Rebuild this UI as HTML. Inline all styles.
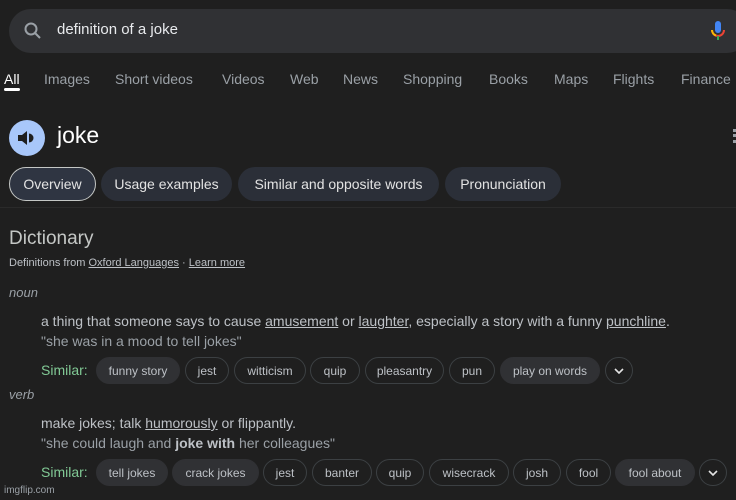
<!DOCTYPE html>
<html><head><meta charset="utf-8"><style>
*{margin:0;padding:0;box-sizing:border-box}
body{width:736px;height:500px;background:#1f1f1f;font-family:"Liberation Sans",Arial,sans-serif;position:relative;overflow:hidden;color:#bdc1c6}
.a{position:absolute;white-space:nowrap}
.tab{position:absolute;top:71px;font-size:14px;color:#9aa0a6}
.chip{position:absolute;top:167px;height:34px;border-radius:17px;background:#2b2f38;color:#e3e3e3;font-size:14px;line-height:34px;text-align:center}
.s{position:absolute;height:27px;border-radius:14px;border:1px solid #3c4043;color:#bdc1c6;font-size:12px;display:flex;align-items:center;justify-content:center;white-space:nowrap}
.f{background:#303134;border-color:#303134}
u{text-decoration:underline}
</style></head><body>
<div class="a" style="left:9px;top:9px;width:740px;height:44px;border-radius:22px;background:#303134"></div>
<svg class="a" style="left:23px;top:21px" width="20" height="20" viewBox="0 0 20 20"><circle cx="8" cy="8" r="5.5" stroke="#9aa0a6" stroke-width="2" fill="none"/><path d="M12 12l5 5" stroke="#9aa0a6" stroke-width="2"/></svg>
<div class="a" style="left:57px;top:21px;font-size:15px;color:#e8eaed">definition of a joke</div>
<svg class="a" style="left:709px;top:19px" width="18" height="24" viewBox="0 0 18 24"><rect x="6" y="2" width="6" height="12" rx="3" fill="#4285f4"/><path d="M3 11a6 6 0 0 0 12 0" stroke="#ea4335" stroke-width="2" fill="none"/><path d="M3 11a6 6 0 0 0 4 5.5" stroke="#fbbc04" stroke-width="2" fill="none"/><path d="M9 17v4" stroke="#34a853" stroke-width="2"/></svg>
<div class="tab" style="left:4px;color:#fff">All</div>
<div class="a" style="left:4px;top:88px;width:16px;height:3px;background:#fff;border-radius:2px"></div>
<div class="tab" style="left:44px">Images</div>
<div class="tab" style="left:115px">Short videos</div>
<div class="tab" style="left:222px">Videos</div>
<div class="tab" style="left:290px">Web</div>
<div class="tab" style="left:343px">News</div>
<div class="tab" style="left:403px">Shopping</div>
<div class="tab" style="left:489px">Books</div>
<div class="tab" style="left:554px">Maps</div>
<div class="tab" style="left:613px">Flights</div>
<div class="tab" style="left:681px">Finance</div>
<div class="a" style="left:9px;top:120px;width:36px;height:36px;border-radius:50%;background:#a8c7fa"></div>
<svg class="a" style="left:15px;top:126px" width="24" height="24" viewBox="0 0 24 24"><path d="M3 9h4l5-4v14l-5-4H3z" fill="#1f1f1f"/><path d="M14 7.5a4.5 4.5 0 0 1 0 9z" fill="#1f1f1f"/></svg>
<div class="a" style="left:57px;top:122px;font-size:23px;color:#fff">joke</div>
<div class="a" style="left:733px;top:129px;width:3px;height:14px;border-left:3px dotted #9aa0a6"></div>
<div class="chip" style="left:9px;width:87px;border:1px solid #c4c7c5;background:#2f3542;line-height:32px">Overview</div>
<div class="chip" style="left:101px;width:131px">Usage examples</div>
<div class="chip" style="left:238px;width:201px">Similar and opposite words</div>
<div class="chip" style="left:445px;width:116px">Pronunciation</div>
<div class="a" style="left:0;top:207px;width:736px;height:1px;background:#2a2a2a"></div>
<div class="a" style="left:9px;top:228px;font-size:19px;color:#c4c7c5">Dictionary</div>
<div class="a" style="left:9px;top:257px;font-size:11px;color:#bdc1c6">Definitions from <u>Oxford Languages</u> · <u>Learn more</u></div>
<div class="a" style="left:9px;top:285px;font-size:13px;font-style:italic;color:#9aa0a6">noun</div>
<div class="a" style="left:41px;top:313px;font-size:14px;color:#bdc1c6">a thing that someone says to cause <u>amusement</u> or <u>laughter</u>, especially a story with a funny <u>punchline</u>.</div>
<div class="a" style="left:41px;top:333px;font-size:14px;color:#9aa0a6">"she was in a mood to tell jokes"</div>
<div class="a" style="left:41px;top:362px;font-size:14px;color:#81c995">Similar:</div>
<div class="s f" style="top:357px;left:96px;width:84px">funny story</div>
<div class="s" style="top:357px;left:185px;width:44px">jest</div>
<div class="s" style="top:357px;left:234px;width:72px">witticism</div>
<div class="s" style="top:357px;left:310px;width:50px">quip</div>
<div class="s" style="top:357px;left:365px;width:79px">pleasantry</div>
<div class="s" style="top:357px;left:449px;width:46px">pun</div>
<div class="s f" style="top:357px;left:500px;width:100px">play on words</div>
<div class="s" style="top:357px;left:605px;width:28px"><svg width="10" height="6" viewBox="0 0 10 6"><path d="M1 1l4 4 4-4" stroke="#e3e3e3" stroke-width="1.6" fill="none"/></svg></div>
<div class="a" style="left:9px;top:387px;font-size:13px;font-style:italic;color:#9aa0a6">verb</div>
<div class="a" style="left:41px;top:415px;font-size:14px;color:#bdc1c6">make jokes; talk <u>humorously</u> or flippantly.</div>
<div class="a" style="left:41px;top:435px;font-size:14px;color:#9aa0a6">"she could laugh and <b style="color:#bdc1c6">joke with</b> her colleagues"</div>
<div class="a" style="left:41px;top:464px;font-size:14px;color:#81c995">Similar:</div>
<div class="s f" style="top:459px;left:96px;width:72px">tell jokes</div>
<div class="s f" style="top:459px;left:172px;width:87px">crack jokes</div>
<div class="s" style="top:459px;left:263px;width:44px">jest</div>
<div class="s" style="top:459px;left:312px;width:60px">banter</div>
<div class="s" style="top:459px;left:376px;width:48px">quip</div>
<div class="s" style="top:459px;left:429px;width:80px">wisecrack</div>
<div class="s" style="top:459px;left:513px;width:48px">josh</div>
<div class="s" style="top:459px;left:566px;width:45px">fool</div>
<div class="s f" style="top:459px;left:615px;width:80px">fool about</div>
<div class="s" style="top:459px;left:699px;width:28px"><svg width="10" height="6" viewBox="0 0 10 6"><path d="M1 1l4 4 4-4" stroke="#e3e3e3" stroke-width="1.6" fill="none"/></svg></div>
<div class="a" style="left:4px;top:485px;font-size:10px;color:#9aa0a6">imgflip.com</div>
</body></html>
